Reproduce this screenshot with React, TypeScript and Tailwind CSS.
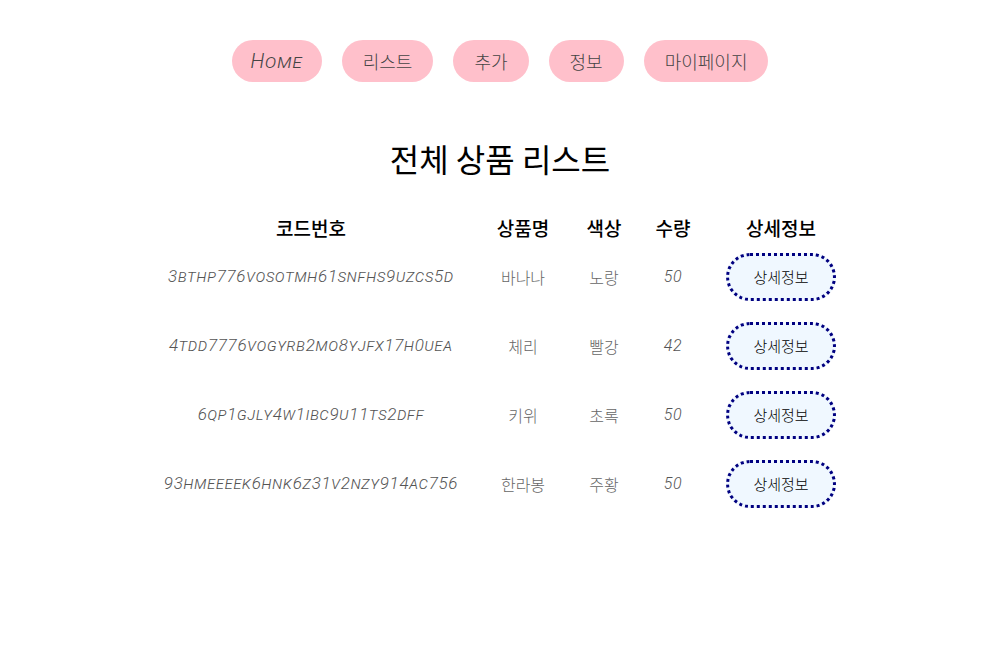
import React from 'react';

type Product = {
  code: string;
  name: string;
  color: string;
  qty: number;
};

const products: Product[] = [
  { code: '3bthp776vosotmh61snfhs9uzcs5d', name: '바나나', color: '노랑', qty: 50 },
  { code: '4tdd7776vogyrb2mo8yjfx17h0uea', name: '체리', color: '빨강', qty: 42 },
  { code: '6qp1gjly4w1ibc9u11ts2dff', name: '키위', color: '초록', qty: 50 },
  { code: '93hmeeeek6hnk6z31v2nzy914ac756', name: '한라봉', color: '주황', qty: 50 },
];

const navItems = ['Home', '리스트', '추가', '정보', '마이페이지'];

const kr = "font-['Noto_Sans_CJK_KR','Noto_Sans',sans-serif]";
const latin = "font-['Roboto','Noto_Sans_CJK_KR',sans-serif] font-light italic [font-variant:small-caps] tracking-[0.04em]";

export default function App() {
  return (
    <div className={`min-h-[650px] w-[1000px] bg-white ${kr}`}>
      {/* Nav */}
      <nav className="flex justify-center gap-5 pt-10">
        {navItems.map((item) => (
          <button
            key={item}
            className={`h-[42px] rounded-full bg-[#ffc0cb] text-[18px] font-light text-[#444] ${
              item === 'Home' ? latin + ' px-[19px] text-[20px]' : 'px-[21px]'
            }`}
          >
            {item}
          </button>
        ))}
      </nav>

      {/* Title */}
      <h2 className="mt-[58px] text-center text-[32px] leading-[36px] text-black">전체 상품 리스트</h2>

      {/* Table */}
      <table className="mx-auto mt-[38px] w-[690px] border-collapse text-center">
        <colgroup>
          <col className="w-[312px]" />
          <col className="w-[112px]" />
          <col className="w-[50px]" />
          <col className="w-[88px]" />
          <col className="w-[128px]" />
        </colgroup>
        <thead>
          <tr className="h-[26px] text-[19px] text-black">
            <th className="font-medium">코드번호</th>
            <th className="font-medium">상품명</th>
            <th className="font-medium">색상</th>
            <th className="font-medium">수량</th>
            <th className="font-medium">상세정보</th>
          </tr>
        </thead>
        <tbody>
          {products.map((p) => (
            <tr key={p.code} className="h-[69px] text-[16px] font-light text-[#666]">
              <td className={`${latin} text-[17px] text-[#555]`}>{p.code}</td>
              <td>{p.name}</td>
              <td>{p.color}</td>
              <td className={`${latin} text-[#555]`}>{p.qty}</td>
              <td>
                <button className="h-[48px] w-[110px] rounded-full border-[3px] border-dotted border-[#000080] bg-[#f0f8ff] text-[15px] text-black">
                  상세정보
                </button>
              </td>
            </tr>
          ))}
        </tbody>
      </table>
    </div>
  );
}
